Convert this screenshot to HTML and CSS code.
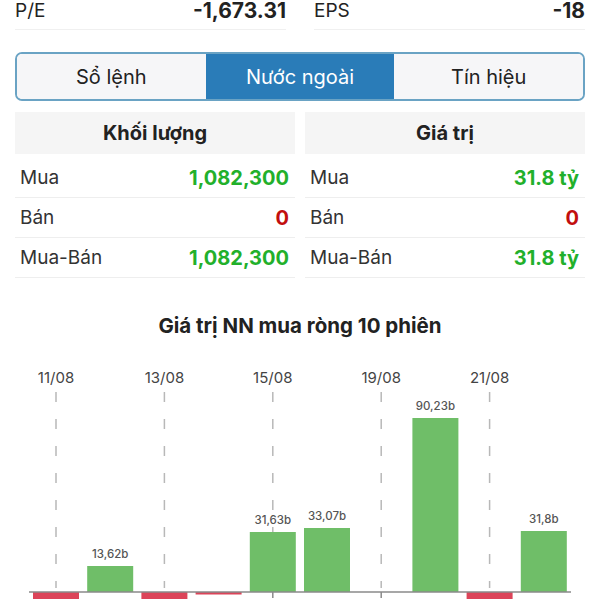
FILE: index.html
```html
<!DOCTYPE html>
<html lang="vi">
<head>
  <meta charset="UTF-8">
  <title>Nước ngoài</title>
  <link rel="stylesheet" href="styles.css">
</head>
<body>
<main class="page">

  <div class="stats">
    <div class="stat">
      <span class="stat-label">P/E</span>
      <span class="stat-value">-1,673.31</span>
    </div>
    <div class="stat">
      <span class="stat-label">EPS</span>
      <span class="stat-value">-18</span>
    </div>
  </div>

  <div class="tabs">
    <div class="tab">Sổ lệnh</div>
    <div class="tab active">Nước ngoài</div>
    <div class="tab">Tín hiệu</div>
  </div>

  <div class="tables">
    <div class="table">
      <div class="table-head">Khối lượng</div>
      <div class="table-row">
        <span>Mua</span>
        <span class="num up">1,082,300</span>
      </div>
      <div class="table-row">
        <span>Bán</span>
        <span class="num down">0</span>
      </div>
      <div class="table-row">
        <span>Mua-Bán</span>
        <span class="num up">1,082,300</span>
      </div>
    </div>
    <div class="table">
      <div class="table-head">Giá trị</div>
      <div class="table-row">
        <span>Mua</span>
        <span class="num up">31.8 tỷ</span>
      </div>
      <div class="table-row">
        <span>Bán</span>
        <span class="num down">0</span>
      </div>
      <div class="table-row">
        <span>Mua-Bán</span>
        <span class="num up">31.8 tỷ</span>
      </div>
    </div>
  </div>

  <h2 class="chart-title">Giá trị NN mua ròng 10 phiên</h2>

  <svg class="chart" width="600" height="261" viewBox="0 0 600 261">
    <g class="grid">
      <line x1="56" y1="54" x2="56" y2="250"/>
      <line x1="164.4" y1="54" x2="164.4" y2="250"/>
      <line x1="272.8" y1="54" x2="272.8" y2="250"/>
      <line x1="381.2" y1="54" x2="381.2" y2="250"/>
      <line x1="489.6" y1="54" x2="489.6" y2="250"/>
    </g>
    <g class="dates">
      <text x="56" y="44.5">11/08</text>
      <text x="164.4" y="44.5">13/08</text>
      <text x="272.8" y="44.5">15/08</text>
      <text x="381.2" y="44.5">19/08</text>
      <text x="489.6" y="44.5">21/08</text>
    </g>
    <g class="bars-up">
      <rect x="87.2" y="228" width="46" height="26"/>
      <rect x="249.8" y="194" width="46" height="60"/>
      <rect x="304" y="190" width="46" height="64"/>
      <rect x="412.4" y="80" width="46" height="174"/>
      <rect x="520.8" y="193" width="46" height="61"/>
    </g>
    <g class="bars-down">
      <rect x="33" y="254" width="46" height="12"/>
      <rect x="141.4" y="254" width="46" height="12"/>
      <rect x="195.6" y="254" width="46" height="2.5"/>
      <rect x="466.6" y="254" width="46" height="12"/>
    </g>
    <g class="values">
      <text x="110.2" y="220">13,62b</text>
      <text x="272.8" y="186">31,63b</text>
      <text x="327" y="182">33,07b</text>
      <text x="435.4" y="72">90,23b</text>
      <text x="543.8" y="185">31,8b</text>
    </g>
    <line class="axis" x1="29" y1="254" x2="571" y2="254"/>
    <g class="ticks">
      <line x1="272.8" y1="254" x2="272.8" y2="260"/>
      <line x1="381.2" y1="254" x2="381.2" y2="260"/>
    </g>
  </svg>

</main>
</body>
</html>
```

FILE: styles.css
```css
body {
  margin: 0;
  background-color: white;
  font-family: Inter, "Noto Sans", sans-serif;
  color: #222;
}

.page {
  width: 600px;
  height: 600px;
  overflow: hidden;
}

.stats {
  display: grid;
  grid-template-columns: 1fr 1fr;
  gap: 28px;
  padding: 0 15px;
}

.stat {
  display: flex;
  justify-content: space-between;
  align-items: center;
  height: 30px;
  padding-bottom: 8px;
  box-sizing: border-box;
  border-bottom: 1px solid #f0f0f0;
  font-size: 20px;
  line-height: 22px;
}

.stat-label {
  font-size: 19px;
}

.stat-value {
  font-size: 21px;
  font-weight: bold;
}

.tabs {
  display: flex;
  margin: 22px 15px 0;
  height: 49px;
  border: 2px solid #6aa3c4;
  border-radius: 7px;
  overflow: hidden;
  box-sizing: border-box;
}

.tab {
  flex: 1;
  display: flex;
  justify-content: center;
  align-items: center;
  background-color: #f6f6f8;
  font-size: 20px;
  color: #222;
}

.tab.active {
  background-color: #2a7cb8;
  color: white;
}

.tables {
  display: grid;
  grid-template-columns: 280px 280px;
  gap: 10px;
  margin: 11px 15px 0;
}

.table-head {
  height: 42px;
  display: flex;
  justify-content: center;
  align-items: center;
  background-color: #f5f5f5;
  font-size: 20px;
  font-weight: bold;
  margin-bottom: 4px;
}

.table-row {
  display: flex;
  justify-content: space-between;
  align-items: center;
  height: 40px;
  box-sizing: border-box;
  padding: 0 6px 0 5px;
  border-bottom: 1px solid #eeeeee;
  font-size: 19px;
  color: #333;
}

.num {
  font-size: 20px;
  font-weight: bold;
}

.up {
  color: #22b02b;
}

.down {
  color: #c20e0e;
}

.chart-title {
  margin: 36px 0 0;
  height: 24px;
  line-height: 24px;
  text-align: center;
  font-size: 20.5px;
  font-weight: bold;
  color: #222;
}

.chart {
  display: block;
}

.grid line {
  stroke: #b8b8b8;
  stroke-width: 1.5;
  stroke-dasharray: 10 17;
}

.dates text {
  font-size: 15px;
  fill: #444;
  text-anchor: middle;
}

.bars-up rect {
  fill: #6fbe68;
}

.bars-down rect {
  fill: #dc4459;
}

.values text {
  font-size: 11.5px;
  font-weight: 500;
  fill: #555;
  text-anchor: middle;
}

.axis,
.ticks line {
  stroke: #8a8a8a;
  stroke-width: 1.5;
}
```
